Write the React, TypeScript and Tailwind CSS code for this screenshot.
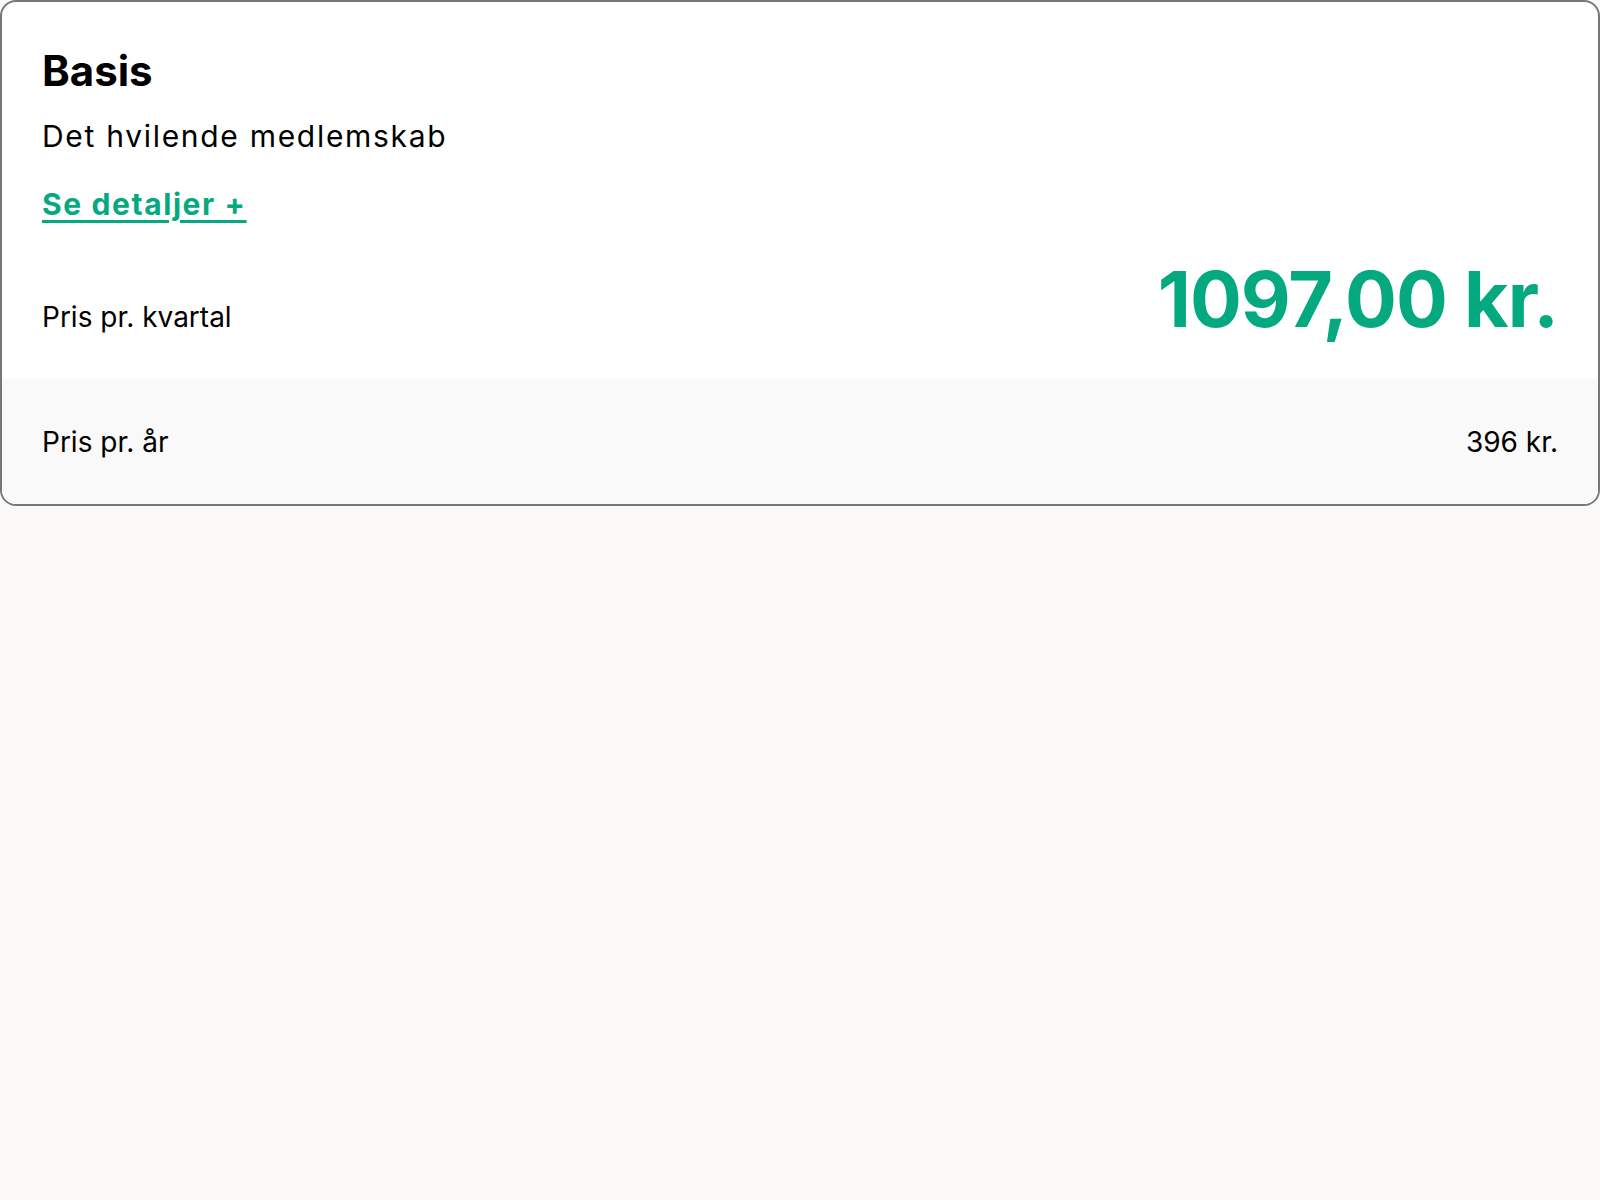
import React from 'react';

const font = { fontFamily: 'Inter, "Noto Sans", sans-serif' };

const MembershipCard: React.FC = () => {
    return (
        <div className="rounded-[16px] border-2 border-[#777777] bg-white overflow-hidden">
            {/* Top */}
            <div className="px-10 pt-[44px] pb-[41px]">
                <h2 className="text-[42px] leading-[50px] font-bold text-black">Basis</h2>
                <p className="mt-[22px] text-[30px] leading-[36px] tracking-[1.7px] text-black">Det hvilende medlemskab</p>
                <a
                    href="#"
                    className="mt-[32px] inline-block text-[30px] leading-[36px] font-bold tracking-[1.6px] text-[#04a97f] underline decoration-[3px] underline-offset-[5px]"
                >
                    Se detaljer +
                </a>
                <div className="mt-[39px] flex items-baseline justify-between">
                    <span className="text-[28px] text-black">Pris pr. kvartal</span>
                    <span className="text-[77px] leading-[77px] font-bold text-[#04a97f] tracking-[-1px]">1097,00 kr.</span>
                </div>
            </div>

            {/* Bottom */}
            <div className="h-[125px] px-10 bg-[#f9f9f9] flex items-center justify-between">
                <span className="text-[28px] text-black">Pris pr. år</span>
                <span className="text-[28px] text-black">396 kr.</span>
            </div>
        </div>
    );
};

export default function App() {
    return (
        <div className="min-h-screen bg-[#faf9f7]" style={font}>
            <MembershipCard />
        </div>
    );
}
